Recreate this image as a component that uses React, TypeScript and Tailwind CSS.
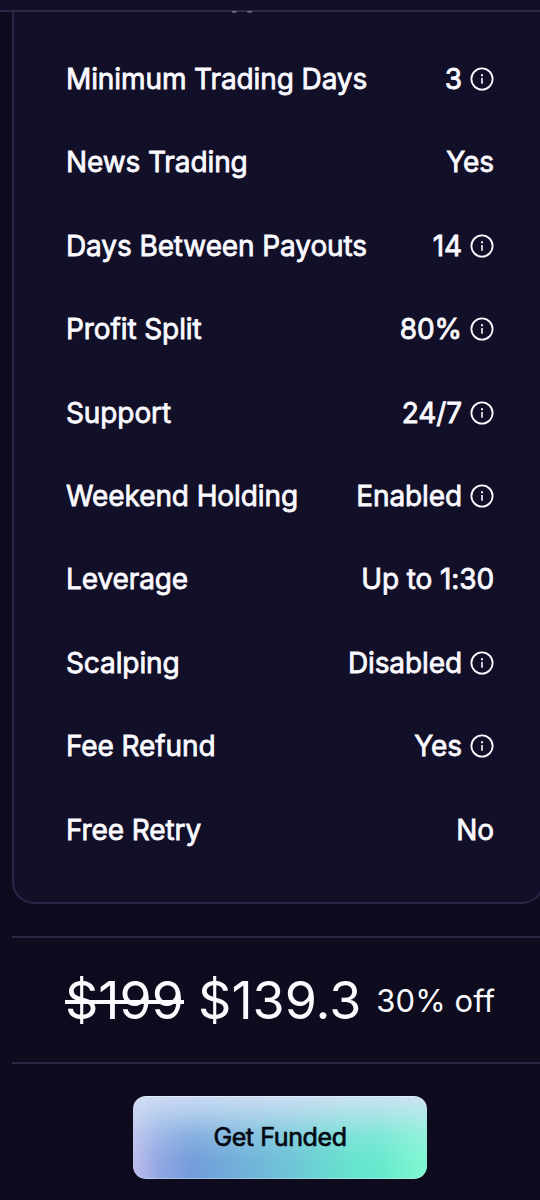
type Rule = {
  label: string;
  value: string;
  info?: boolean;
};

const RULES: Rule[] = [
  { label: "Minimum Trading Days", value: "3", info: true },
  { label: "News Trading", value: "Yes" },
  { label: "Days Between Payouts", value: "14", info: true },
  { label: "Profit Split", value: "80%", info: true },
  { label: "Support", value: "24/7", info: true },
  { label: "Weekend Holding", value: "Enabled", info: true },
  { label: "Leverage", value: "Up to 1:30" },
  { label: "Scalping", value: "Disabled", info: true },
  { label: "Fee Refund", value: "Yes", info: true },
  { label: "Free Retry", value: "No" },
];

function InfoIcon() {
  return (
    <svg className="size-6" viewBox="0 0 24 24" fill="none" stroke="#fafaff">
      <circle cx="12" cy="12" r="10.6" strokeWidth="1.8" />
      <path d="M12 11v5.800" strokeWidth="1.6" />
      <path d="M12 7.300v1.900" strokeWidth="1.9" />
    </svg>
  );
}

function RuleRow({ label, value, info }: Rule) {
  return (
    <div className="flex h-[83.4px] items-center justify-between whitespace-nowrap text-[28px] tracking-[-0.1px] text-[#fafaff] [-webkit-text-stroke:0.8px_#fafaff]">
      <span>{label}</span>
      <span className="flex items-center gap-2">
        {value}
        {info && <InfoIcon />}
      </span>
    </div>
  );
}

export default function App() {
  return (
    <div className="h-[1200px] w-[540px] overflow-hidden bg-[#0d0b1d] font-['Inter',sans-serif]">
      {/* sticky header edge */}
      <div className="h-[11.5px] border-b-2 border-[#2c2849] bg-[#120f29]" />

      <div className="relative ml-3 h-[892.5px] w-[532px] rounded-b-[22px] border-2 border-t-0 border-[#2a2647] bg-[#120f29] pl-[52px] pr-[48px] pt-[25.8px]">
        {/* descenders of the row scrolled under the header */}
        <svg className="absolute left-[216px] top-[-1px] h-[3px] w-[24px]" viewBox="0 0 24 3">
          <path d="M2 .6q2.300 1 4.600 0M17.300.6q2.300 1 4.600 0" fill="none" stroke="#aaa8ba" strokeWidth="1" />
        </svg>
        {RULES.map((r) => (
          <RuleRow key={r.label} {...r} />
        ))}
      </div>

      <div className="ml-3 mt-[31.5px] flex h-[128.5px] items-center border-y-2 border-[#2b2744] pl-[53px] pt-[2px] text-[#fafaff]">
        <span className="text-[52px] line-through decoration-4">$199</span>
        <span className="ml-[14px] text-[52px]">$139.3</span>
        <span className="ml-[15px] whitespace-nowrap text-[31px] tracking-[0.1px]">30% off</span>
      </div>

      <div className="flex justify-center pl-5 pt-8">
        <button className="h-[83px] w-[294px] rounded-[13px] bg-[linear-gradient(180deg,rgba(213,224,246,0.9)_0%,rgba(205,226,243,0.68)_20%,rgba(190,225,240,0.28)_48%,rgba(190,225,240,0.06)_72%,transparent_85%),linear-gradient(90deg,rgba(205,196,240,0.85)_0%,rgba(190,190,238,0.4)_9%,transparent_21%,transparent_84%,rgba(150,250,215,0.55)_100%),linear-gradient(90deg,#7296dc_0%,#729adb_18%,#6fc0d8_50%,#66e3ce_74%,#68f2cc_100%)] text-[25px] tracking-[-0.4px] text-[#050812] shadow-[inset_0_1px_0_rgba(240,248,255,0.6),inset_0_-1px_0_rgba(220,245,245,0.4)] [-webkit-text-stroke:0.7px_#050812]">
          Get Funded
        </button>
      </div>
    </div>
  );
}
